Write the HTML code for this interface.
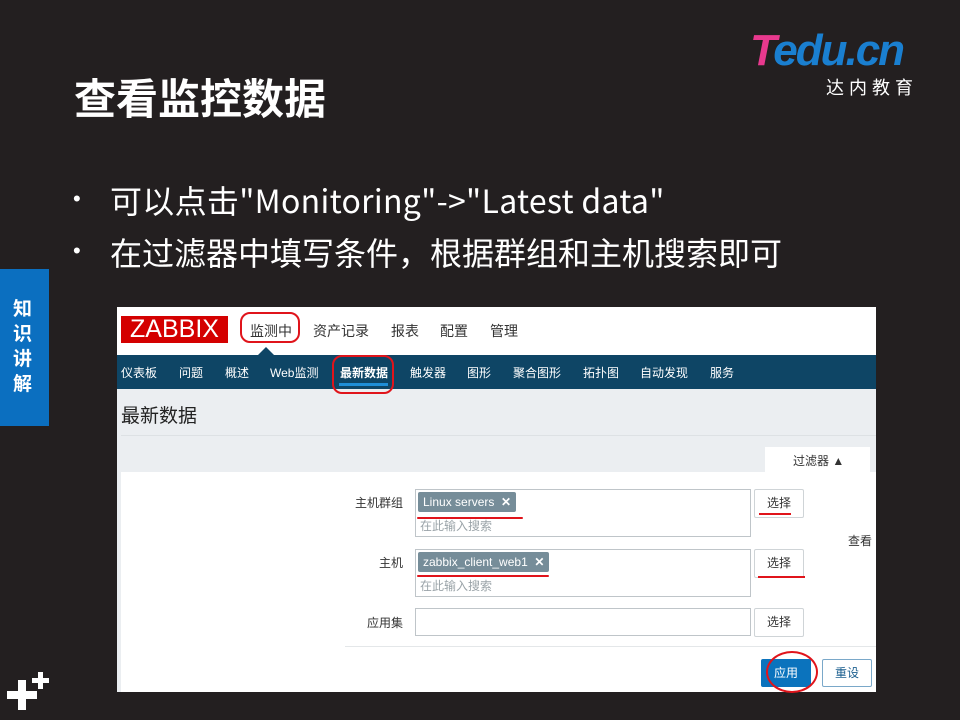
<!DOCTYPE html>
<html><head><meta charset="utf-8"><style>
*{margin:0;padding:0;box-sizing:border-box}
body{width:960px;height:720px;background:#231f20;position:relative;overflow:hidden;font-family:"Liberation Sans","Noto Sans CJK SC",sans-serif}
.a{position:absolute;white-space:nowrap}
.w{color:#fff}
.b{font-family:"Noto Sans CJK SC",sans-serif;font-size:32px;line-height:40px}
.nav span{position:absolute;top:364px;font-size:12px;color:#fff}
.top span{position:absolute;top:321px;font-size:14px;color:#333}
.lbl{position:absolute;font-size:12px;color:#333;text-align:right;width:100px;left:303px}
.inp{position:absolute;left:415px;width:336px;background:#fff;border:1px solid #bfc5c9}
.btn{position:absolute;left:754px;width:50px;height:29px;border:1px solid #cfd4d7;border-radius:2px;background:#fff;font-size:12px;color:#333;text-align:center;line-height:27px}
.tag{position:absolute;background:#768d99;color:#fff;font-size:12px;height:20px;line-height:20px;padding:0 5px;border-radius:2px}
.ph{position:absolute;font-size:12px;color:#9aa3a8}
</style></head><body>
<div class="a w" style="left:74px;top:72px;font-size:42px;font-weight:bold;line-height:50px;font-family:'Noto Sans CJK SC',sans-serif">查看监控数据</div>
<div class="a w" style="left:73px;top:186px;font-size:22px">•</div>
<div class="a w b" style="left:110px;top:180px;letter-spacing:0.3px">可以点击"Monitoring"-&gt;"Latest data"</div>
<div class="a w" style="left:73px;top:238px;font-size:22px">•</div>
<div class="a w b" style="left:110px;top:232px">在过滤器中填写条件，根据群组和主机搜索即可</div>
<!-- logo -->
<div class="a" style="left:750px;top:28px;font-size:44px;font-weight:bold;font-style:italic;letter-spacing:-2px;line-height:46px"><span style="color:#e8398e">T</span><span style="color:#1a7fd0">edu.cn</span></div>
<div class="a w" style="left:826px;top:74px;font-size:18px;letter-spacing:5px">达内教育</div>
<!-- side tab -->
<div class="a" style="left:0;top:269px;width:49px;height:157px;background:#0b6fc0"></div>
<div class="a w" style="left:13px;top:297px;font-size:19px;font-weight:bold;line-height:25px;white-space:normal;width:22px">知识讲解</div>
<div class="a" style="left:7px;top:691px;width:30px;height:8px;background:#fff"></div>
<div class="a" style="left:18px;top:680px;width:8px;height:30px;background:#fff"></div>
<div class="a" style="left:32px;top:678px;width:17px;height:5px;background:#fff"></div>
<div class="a" style="left:38px;top:672px;width:5px;height:17px;background:#fff"></div>
<!-- screenshot -->
<div class="a" style="left:117px;top:307px;width:759px;height:385px;background:#ebeef1"></div>
<div class="a" style="left:117px;top:307px;width:759px;height:48px;background:#fff"></div>
<div class="a" style="left:121px;top:316px;width:107px;height:27px;background:#d40000;color:#fff;font-size:25px;line-height:27px;text-align:center">ZABBIX</div>
<div class="top"><span style="left:250px">监测中</span><span style="left:313px">资产记录</span><span style="left:391px">报表</span><span style="left:440px">配置</span><span style="left:490px">管理</span></div>
<div class="a" style="left:240px;top:312px;width:60px;height:31px;border:2px solid #e0141b;border-radius:10px"></div>
<div class="a" style="left:117px;top:355px;width:759px;height:34px;background:#0e4565"></div>
<div class="a" style="left:257px;top:347px;width:0;height:0;border-left:9px solid transparent;border-right:9px solid transparent;border-bottom:9px solid #0e4565"></div>
<div class="nav"><span style="left:121px">仪表板</span><span style="left:179px">问题</span><span style="left:225px">概述</span><span style="left:270px">Web监测</span><span style="left:340px;font-weight:bold">最新数据</span><span style="left:410px">触发器</span><span style="left:467px">图形</span><span style="left:513px">聚合图形</span><span style="left:583px">拓扑图</span><span style="left:640px">自动发现</span><span style="left:710px">服务</span></div>
<div class="a" style="left:339px;top:383px;width:49px;height:3px;background:#1f8ed6"></div>
<div class="a" style="left:332px;top:355px;width:62px;height:39px;border:2px solid #e0141b;border-radius:10px"></div>
<div class="a" style="left:121px;top:401px;font-size:19px;color:#222">最新数据</div>
<div class="a" style="left:121px;top:435px;width:755px;height:1px;background:#dde1e4"></div>
<div class="a" style="left:765px;top:447px;width:105px;height:26px;background:#fff"></div>
<div class="a" style="left:793px;top:452px;font-size:12px;color:#333">过滤器 ▲</div>
<div class="a" style="left:121px;top:472px;width:755px;height:220px;background:#fff"></div>
<div class="lbl" style="top:494px">主机群组</div>
<div class="lbl" style="top:554px">主机</div>
<div class="lbl" style="top:614px">应用集</div>
<div class="inp" style="top:489px;height:48px"></div>
<div class="inp" style="top:549px;height:48px"></div>
<div class="inp" style="top:608px;height:28px"></div>
<div class="tag" style="left:418px;top:492px">Linux servers &nbsp;<b>✕</b></div>
<div class="tag" style="left:418px;top:552px">zabbix_client_web1 &nbsp;<b>✕</b></div>
<div class="ph" style="left:420px;top:517px">在此输入搜索</div>
<div class="ph" style="left:420px;top:577px">在此输入搜索</div>
<div class="btn" style="top:489px">选择</div>
<div class="btn" style="top:549px">选择</div>
<div class="btn" style="top:608px">选择</div>
<div class="a" style="left:417px;top:517px;width:106px;height:2px;background:#e0141b;border-radius:1px"></div>
<div class="a" style="left:417px;top:575px;width:132px;height:2px;background:#e0141b;border-radius:1px"></div>
<div class="a" style="left:759px;top:513px;width:32px;height:2px;background:#e0141b"></div>
<div class="a" style="left:758px;top:576px;width:47px;height:2px;background:#e0141b"></div>
<div class="a" style="left:848px;top:532px;font-size:12px;color:#333">查看</div>
<div class="a" style="left:345px;top:646px;width:531px;height:1px;background:#e4e7e9"></div>
<div class="a" style="left:761px;top:659px;width:50px;height:28px;background:#0b73bd;color:#fff;font-size:12px;text-align:center;line-height:28px;border-radius:2px">应用</div>
<div class="a" style="left:822px;top:659px;width:50px;height:28px;background:#fff;border:1px solid #7aa8c9;color:#1b5f8f;font-size:12px;text-align:center;line-height:26px;border-radius:2px">重设</div>
<div class="a" style="left:766px;top:651px;width:52px;height:42px;border:2px solid #e0141b;border-radius:50%"></div>
</body></html>
